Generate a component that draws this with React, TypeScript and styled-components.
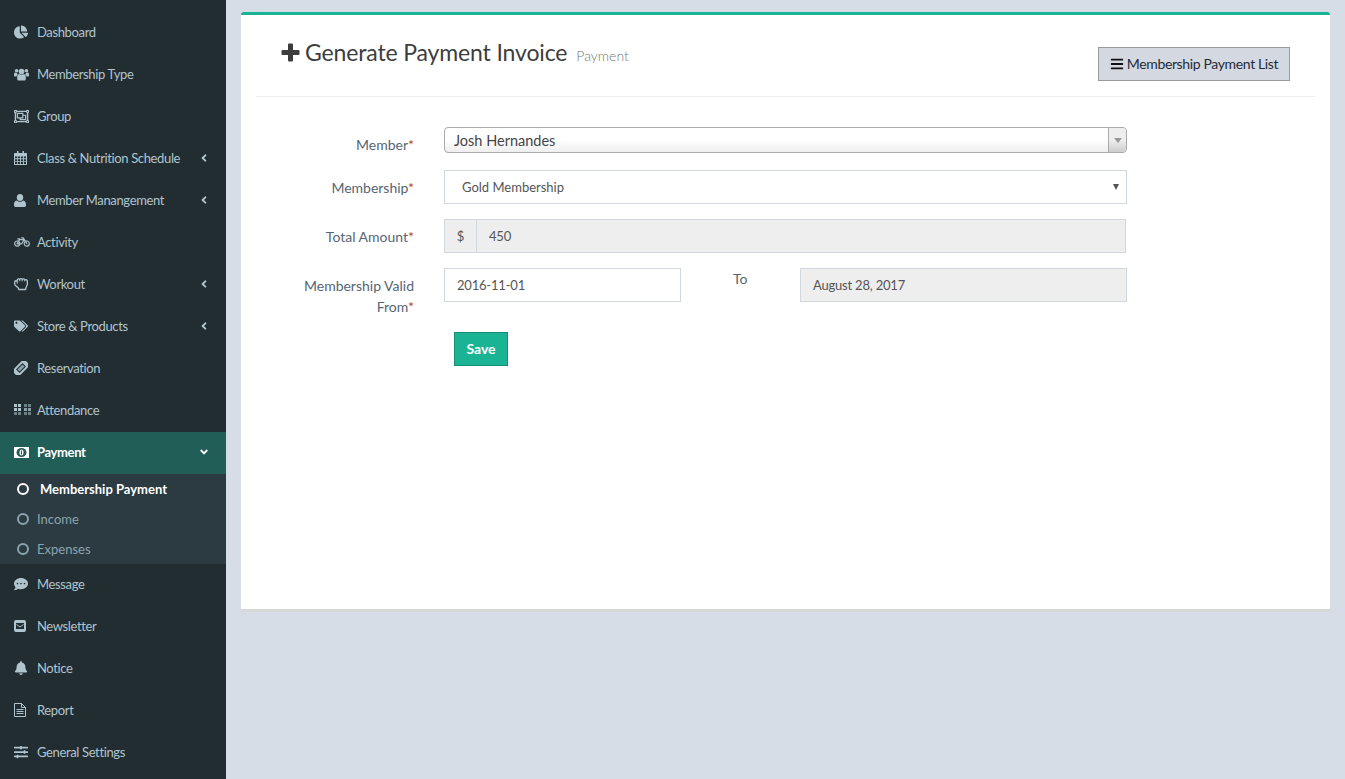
import React from "react";
import styled, { createGlobalStyle } from "styled-components";
import {
  FaChartPie, FaRegObjectGroup, FaBicycle, FaRegHandRock, FaTags,
  FaCommentDots, FaBell, FaSlidersH,
  FaAngleLeft, FaAngleDown, FaBars,
} from "react-icons/fa";

const Global = createGlobalStyle`
  html, body { margin: 0; padding: 0; height: 100%; }
  body { background: #d6dde7; font-family: "Lato", "Noto Sans", sans-serif; font-size: 14px; color: #444; }
  * { box-sizing: border-box; }
`;

const Page = styled.div`display: flex; min-height: 779px; height: 779px; overflow: hidden;`;
const Sidebar = styled.nav`width: 226px; flex: none; background: #222d32; padding-top: 12px;`;
const NavItem = styled.div<{ $active?: boolean }>`
  height: 42px; display: flex; align-items: center; padding: 0 15px 2px 14px;
  font-size: 13px; letter-spacing: -0.36px; color: ${(p) => (p.$active ? "#ffffff" : "#b0c4ce")};
  background: ${(p) => (p.$active ? "#225e58" : "transparent")};
  font-weight: ${(p) => (p.$active ? 700 : 400)};
`;
const NavIcon = styled.span`width: 23px; flex: none; display: flex; align-items: center; font-size: 14px;`;
const NavLabel = styled.span`flex: 1; white-space: nowrap;`;
const Chevron = styled.span`display: flex; align-items: center; font-size: 12px; width: 12px; margin-right: 1px;`;
const SubMenu = styled.div`background: #2c3b41;`;
const SubItem = styled.div<{ $active?: boolean }>`
  height: 30px; display: flex; align-items: center; padding-left: 17px; font-size: 13px;
  color: ${(p) => (p.$active ? "#ffffff" : "#8aa4af")};
  font-weight: ${(p) => (p.$active ? 700 : 400)};
`;
const Ring = styled.span<{ $active?: boolean }>`
  width: 12px; height: 12px; border: 2.5px solid currentColor; border-radius: 50%;
  margin-right: ${(p) => (p.$active ? 11 : 8)}px; flex: none;
`;

const Main = styled.main`flex: 1; padding: 12px 15px 0;`;
const Box = styled.section`
  height: 600px; background: #fff; border-top: 3px solid #1ab394; border-bottom: 3px solid #d8d8d8; border-radius: 3px 3px 0 0;
  padding: 0 15px;
`;
const Header = styled.header`
  height: 82px; border-bottom: 1px solid #eeeeee; display: flex; justify-content: space-between;
  padding: 0 25px;
`;
const Title = styled.h1`
  margin: 21px 0 0; height: 32px; display: flex; align-items: center; font-size: 23px; font-weight: 400; color: #3d3d3d;
  white-space: nowrap; letter-spacing: -0.14px;
`;
const TitleIcon = styled.span`display: flex; margin-right: 5px; color: #3d3d3d;`;
const Small = styled.small`font-size: 14px; font-weight: 300; color: #777; margin-left: 9px; position: relative; top: 3px; letter-spacing: 0;`;
const ListButton = styled.button`
  margin-top: 32px; height: 34px; width: 192px; background: #d4d8e1; border: 1px solid #98989d;
  font: inherit; letter-spacing: -0.36px; color: #222d3a; display: flex; align-items: center; justify-content: center; gap: 3px; white-space: nowrap; padding: 0 0 1px;
  svg { color: #111; }
`;
const Form = styled.form`padding-top: 30px;`;
const Row = styled.div`display: flex; margin-bottom: 15px;`;
const Label = styled.label`
  width: 158px; flex: none; margin-right: 30px; padding: 7px 0 0 27px; text-align: right;
  font-size: 14px; line-height: 21px; color: #566573;
`;
const Star = styled.span`color: #a94442;`;
const Control = styled.div`width: 683px; display: flex;`;
const Select2 = styled.div`
  width: 100%; height: 26px; border: 1px solid #aaa; border-radius: 4px; display: flex; align-items: center;
  background: linear-gradient(#fff 50%, #eee); padding-left: 9px; font-size: 14.5px; color: #444; position: relative;
`;
const Select2Arrow = styled.span`
  position: absolute; right: 0; top: 0; bottom: 0; width: 18px; border-left: 1px solid #aaa;
  background: linear-gradient(#eee 50%, #ccc); border-radius: 0 4px 4px 0;
  display: flex; align-items: center; justify-content: center;
  &::after { content: ""; border: 4px solid transparent; border-top: 5px solid #999; border-bottom: 0; }
`;
const SelectBox = styled.div`
  width: 100%; height: 34px; border: 1px solid #d2d6de; display: flex; align-items: center; justify-content: space-between;
  padding: 0 7px 0 17px; font-size: 13px; color: #555;
  &::after { content: ""; border: 3px solid transparent; border-top: 6px solid #555; border-bottom: 0; }
`;
const AmountControl = styled(Control)`width: 682px;`;
const Addon = styled.span`
  width: 32px; height: 34px; flex: none; background: #eee; border: 1px solid #d2d6de; border-right: 0;
  display: flex; align-items: center; justify-content: center; color: #555; font-size: 13px;
`;
const Input = styled.input<{ $w?: number }>`
  ${(p) => (p.$w ? `width: ${p.$w}px; flex: none;` : "flex: 1; min-width: 0;")}
  height: 34px; border: 1px solid #d2d6de; padding: 0 12px; font: inherit; font-size: 13px; letter-spacing: -0.2px; color: #555; outline: 0;
  &:read-only { background: #eee; }
  &:not(:read-only) { background: #fff; }
`;
const ToLabel = styled.span`width: 119px; flex: none; padding: 0 0 0 52px; line-height: 21px; color: #566573;`;
const SaveButton = styled.button`
  margin-left: 198px; width: 54px; height: 34px; background: #1ab394; border: 1px solid #148d75; color: #fff;
  font: inherit; font-weight: 700; font-size: 14px; padding: 0 0 2px; display: block;
`;

const PlusIcon = () => (
  <svg width="19" height="19" viewBox="0 0 19 19" fill="currentColor">
    <path d="M7 1.5a1 1 0 0 1 1-1h3a1 1 0 0 1 1 1V7h5.5a1 1 0 0 1 1 1v3a1 1 0 0 1-1 1H12v5.5a1 1 0 0 1-1 1H8a1 1 0 0 1-1-1V12H1.5a1 1 0 0 1-1-1V8a1 1 0 0 1 1-1H7z" />
  </svg>
);
const UsersIcon = () => (
  <svg width="15" height="13" viewBox="0 0 15 13" fill="currentColor">
    <circle cx="7.5" cy="3.6" r="2.8" /><circle cx="2.6" cy="2.8" r="1.8" /><circle cx="12.4" cy="2.8" r="1.8" />
    <path d="M3.2 8.6c0-1.6 1.2-2.5 2-2.5.6.5 1.4.8 2.3.8s1.700-.3 2.300-.8c.8 0 2 .9 2 2.500V11c0 1-.7 1.500-1.600 1.500H4.800c-.9 0-1.600-.5-1.600-1.500z" />
    <path d="M2.600 8.500H.9C.4 8.500 0 8.100 0 7.500V6.200c0-1 .7-1.600 1.300-1.600.4.300.9.500 1.400.500.4.600.900 1 1.300 1.200-.8.500-1.400 1.300-1.400 2.200zM12.400 8.500h1.700c.5 0 .9-.4.900-1V6.200c0-1-.7-1.600-1.300-1.600-.4.300-.9.500-1.400.500-.4.600-.9 1-1.300 1.200.8.500 1.400 1.300 1.400 2.200z" />
  </svg>
);
const CalendarIcon = () => (
  <svg width="13" height="14" viewBox="0 0 13 14" fill="currentColor">
    <path fillRule="evenodd" d="M3 0h1.500v2H8.500V0H10v2h2c.6 0 1 .4 1 1v10c0 .6-.4 1-1 1H1c-.6 0-1-.4-1-1V3c0-.6.4-1 1-1h2zM1 5.500v1.800h2.200V5.500zm3 0v1.800h2.100V5.500zm3 0v1.800h2.100V5.500zm3 0v1.800h2V5.500zM1 8.200V10h2.200V8.200zm3 0V10h2.100V8.200zm3 0V10h2.100V8.200zm3 0V10h2V8.200zM1 10.800V13h2.200v-2.200zm3 0V13h2.100v-2.200zm3 0V13h2.100v-2.200zm3 0V13h2v-2.200z" />
  </svg>
);
const UserIcon = () => (
  <svg width="12" height="13" viewBox="0 0 12 13" fill="currentColor">
    <ellipse cx="6" cy="3.500" rx="3.200" ry="3.500" />
    <path d="M2.800 6.500c.8.800 1.900 1.300 3.200 1.300s2.400-.5 3.200-1.300c1.800.2 2.800 1.700 2.800 3.800v1c0 1-.8 1.700-1.700 1.700H1.700C.8 13 0 12.300 0 11.300v-1C0 8.200 1 6.700 2.800 6.500z" />
  </svg>
);
const TicketIcon = () => (
  <svg width="14" height="14" viewBox="0 0 14 14">
    <g transform="rotate(-45 7 7)">
      <rect x="-1.500" y="2.500" width="17" height="9" rx="1" fill="currentColor" />
      <rect x="2.500" y="4.500" width="9" height="5" fill="#222d32" />
      <rect x="3.500" y="5.500" width="7" height="3" fill="currentColor" opacity=".75" />
    </g>
  </svg>
);
const AttIcon = () => (
  <svg width="17" height="12" viewBox="0 0 17 12" fill="currentColor">
    <rect x="0" y="0" width="3" height="3" /><rect x="4" y="0" width="3" height="3" />
    <rect x="0" y="4" width="3" height="3" /><rect x="4" y="4" width="3" height="3" />
    <rect x="0" y="8" width="3" height="3" opacity=".55" /><rect x="4" y="8" width="3" height="3" opacity=".55" />
    <rect x="10" y="0" width="3" height="3" opacity=".55" /><rect x="14" y="0" width="3" height="3" opacity=".55" />
    <rect x="10" y="4" width="3" height="3" opacity=".75" /><rect x="14" y="4" width="3" height="3" opacity=".75" />
    <rect x="10" y="8" width="3" height="3" opacity=".55" /><rect x="14" y="8" width="3" height="3" opacity=".55" />
  </svg>
);
const MoneyIcon = () => (
  <svg width="15" height="11" viewBox="0 0 15 11">
    <rect x="0" y="0" width="15" height="11" fill="#fff" />
    <ellipse cx="7.500" cy="5.500" rx="5" ry="4.500" fill="#225e58" />
    <ellipse cx="7.500" cy="5.500" rx="2" ry="3" fill="#fff" />
    <rect x="7" y="3.500" width="1" height="4" fill="#225e58" />
  </svg>
);
const NewsIcon = () => (
  <svg width="12" height="12" viewBox="0 0 12 12">
    <rect width="12" height="12" rx="2" fill="currentColor" />
    <rect x="2" y="3" width="8" height="6" fill="#222d32" />
    <path d="M2.500 4.500 6 7l3.500-2.500" fill="none" stroke="currentColor" strokeWidth="1" />
  </svg>
);
const ReportIcon = () => (
  <svg width="12" height="14" viewBox="0 0 12 14" fill="none" stroke="currentColor">
    <path d="M.5.500h7l4 4v9H.5z" />
    <path d="M7.500.500v4h4" />
    <path d="M2.500 6.500h7M2.500 8.500h7M2.500 10.500h7" />
  </svg>
);

const before: [React.ReactNode, string, boolean?][] = [
  [<FaChartPie />, "Dashboard"],
  [<UsersIcon />, "Membership Type"],
  [<FaRegObjectGroup style={{ fontSize: 15 }} />, "Group"],
  [<CalendarIcon />, "Class & Nutrition Schedule", true],
  [<UserIcon />, "Member Manangement", true],
  [<FaBicycle style={{ fontSize: 16 }} />, "Activity"],
  [<FaRegHandRock />, "Workout", true],
  [<FaTags />, "Store & Products", true],
  [<TicketIcon />, "Reservation"],
  [<AttIcon />, "Attendance"],
];
const after: [React.ReactNode, string][] = [
  [<FaCommentDots />, "Message"],
  [<NewsIcon />, "Newsletter"],
  [<FaBell />, "Notice"],
  [<ReportIcon />, "Report"],
  [<FaSlidersH />, "General Settings"],
];

export default function App() {
  return (
    <Page>
      <Global />
      <Sidebar>
        {before.map(([icon, label, more]) => (
          <NavItem key={label}>
            <NavIcon>{icon}</NavIcon>
            <NavLabel>{label}</NavLabel>
            {more && <Chevron><FaAngleLeft /></Chevron>}
          </NavItem>
        ))}
        <NavItem $active>
          <NavIcon><MoneyIcon /></NavIcon>
          <NavLabel>Payment</NavLabel>
          <Chevron><FaAngleDown /></Chevron>
        </NavItem>
        <SubMenu>
          <SubItem $active><Ring $active />Membership Payment</SubItem>
          <SubItem><Ring />Income</SubItem>
          <SubItem><Ring />Expenses</SubItem>
        </SubMenu>
        {after.map(([icon, label]) => (
          <NavItem key={label}>
            <NavIcon>{icon}</NavIcon>
            <NavLabel>{label}</NavLabel>
          </NavItem>
        ))}
      </Sidebar>
      <Main>
        <Box>
          <Header>
            <Title>
              <TitleIcon><PlusIcon /></TitleIcon>
              Generate Payment Invoice
              <Small>Payment</Small>
            </Title>
            <ListButton type="button"><FaBars />Membership Payment List</ListButton>
          </Header>
          <Form>
            <Row>
              <Label>Member<Star>*</Star></Label>
              <Control>
                <Select2>Josh Hernandes<Select2Arrow /></Select2>
              </Control>
            </Row>
            <Row>
              <Label>Membership<Star>*</Star></Label>
              <Control><SelectBox>Gold Membership</SelectBox></Control>
            </Row>
            <Row>
              <Label>Total Amount<Star>*</Star></Label>
              <AmountControl>
                <Addon>$</Addon>
                <Input readOnly value="450" />
              </AmountControl>
            </Row>
            <Row>
              <Label>Membership Valid From<Star>*</Star></Label>
              <Control>
                <Input $w={237} defaultValue="2016-11-01" />
                <ToLabel>To</ToLabel>
                <Input $w={327} readOnly value="August 28, 2017" />
              </Control>
            </Row>
            <SaveButton type="button">Save</SaveButton>
          </Form>
        </Box>
      </Main>
    </Page>
  );
}
